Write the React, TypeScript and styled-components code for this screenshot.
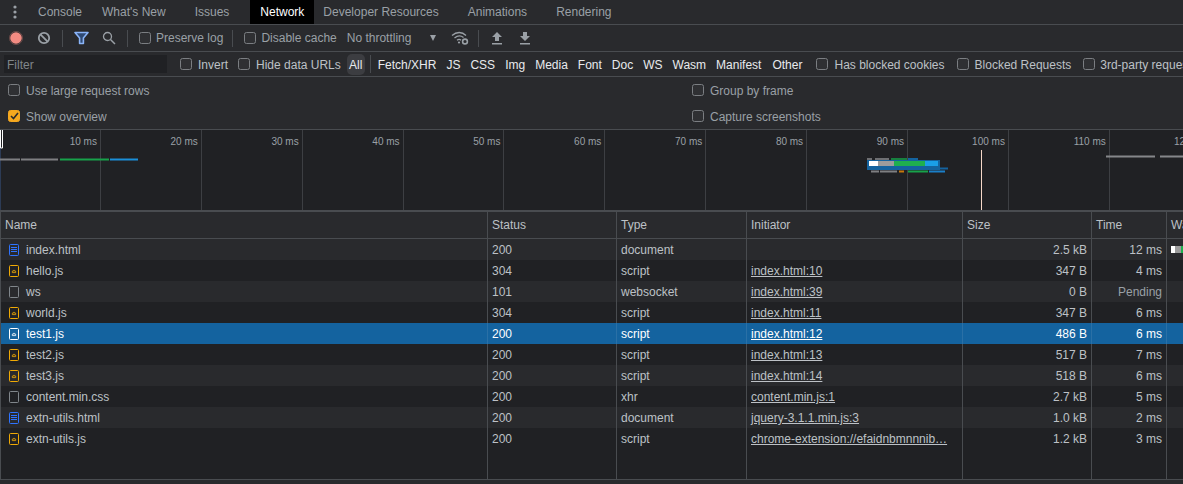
import React from "react";
import styled, { createGlobalStyle, css } from "styled-components";

const Global = createGlobalStyle`
  html, body { margin: 0; padding: 0; background: #292a2d; overflow: hidden; }
  * { box-sizing: border-box; }
`;

const Page = styled.div`
  width: 1183px; height: 484px; overflow: hidden; background: #292a2d;
  font: 12px/1 "Liberation Sans", Arial, sans-serif; color: #9aa0a6;
  display: flex; flex-direction: column;
`;
const Label = styled.span<{ $ml?: number; $bright?: boolean }>`
  margin-left: ${p => p.$ml ?? 5}px; flex: none;
  color: ${p => (p.$bright ? "#bdc1c6" : "#9aa0a6")};
`;
const KindTag = styled.span<{ $ml: number }>`margin-left: ${p => p.$ml}px; color: #e8eaed; flex: none;`;
const Bar = styled.div<{ $h: number; $drop?: boolean }>`
  height: ${p => p.$h}px; flex: none; display: flex; align-items: center;
  border-bottom: 1px solid #494c50; white-space: nowrap; overflow: hidden;
  ${p => p.$drop && css`& > ${Label}, & > ${KindTag} { margin-top: 2px; }`}
`;
const Dots = styled.svg`width: 4px; height: 14px; margin: 0 21px 0 13px; flex: none;`;
const Tab = styled.div`
  width: 64px; height: 24px; margin-left: 21px; flex: none; display: flex; align-items: center; justify-content: center;
  color: #ffffff; background: #000000;
`;
const Tool = styled.svg<{ $ml: number }>`margin-left: ${p => p.$ml}px; flex: none; display: block;`;
const Divider = styled.span<{ $ml: number; $h?: number }>`
  width: 1px; height: ${p => p.$h ?? 17}px; background: #494c50; margin-left: ${p => p.$ml}px; flex: none;
`;
const Check = styled.span<{ $on?: boolean; $ml: number }>`
  width: 12px; height: 12px; flex: none; border-radius: 2.5px; margin-left: ${p => p.$ml}px;
  border: 1px solid ${p => (p.$on ? "#f5a81f" : "#7b7e82")}; background: ${p => (p.$on ? "#f5a81f" : "#2f3033")};
  display: flex; align-items: center; justify-content: center;
`;
const Caret = styled.span`
  margin-left: 19px; width: 0; height: 0; flex: none;
  border-left: 3.5px solid transparent; border-right: 3.5px solid transparent; border-top: 6px solid #9aa0a6;
`;
const FilterBox = styled.div`
  width: 163px; height: 18px; margin-left: 4px; flex: none; background: #202124; color: #80868b;
  padding: 1px 0 0 3px; display: flex; align-items: center;
`;
const Pill = styled.span`
  width: 18px; height: 21px; margin-left: 6px; flex: none; border-radius: 5px; background: #3c3d41; color: #e8eaed;
  padding-top: 1px; display: flex; align-items: center; justify-content: center;
`;
const Settings = styled.div`
  height: 53px; flex: none; border-bottom: 1px solid #494c50;
  display: grid; grid-template-columns: 692px 1fr; grid-auto-rows: 26px; align-items: center;
`;
const Setting = styled.div<{ $ml: number }>`
  display: flex; align-items: center; margin-left: ${p => p.$ml}px;
  & > ${Label} { margin-top: 1px; }
`;

const Overview = styled.div`
  height: 82px; flex: none; position: relative; overflow: hidden; background: #202124;
  border-bottom: 2px solid #494c50; display: flex;
`;
const Tick = styled.div`
  flex: 0 0 100.9px; height: 80px; border-right: 1px solid #3d3f43; text-align: right;
  padding: 7px 3px 0 0; font-size: 10px; color: #9aa0a6; white-space: nowrap;
`;
const OverSvg = styled.svg`position: absolute; left: 0; top: 0;`;

const Table = styled.div`flex: none; height: 268px; border-left: 1px solid #494c50; border-bottom: 1px solid #494c50; display: flex; flex-direction: column;`;
const COLS = "487px 129px 130px 216px 129px 75px 1fr";
const Head = styled.div`
  height: 27px; flex: none; display: grid; grid-template-columns: ${COLS}; background: #292a2d;
  border-bottom: 1px solid #494c50; color: #bdc1c6;
`;
const HeadCell = styled.div`
  border-right: 1px solid #494c50; padding-left: 4px; display: flex; align-items: center; overflow: hidden; white-space: nowrap;
  &:last-child { border-right: 0; }
`;
const Row = styled.div<{ $odd: boolean; $sel?: boolean }>`
  height: 21px; flex: none; display: grid; grid-template-columns: ${COLS};
  background: ${p => (p.$sel ? "#14639f" : p.$odd ? "#292a2d" : "#202124")};
  color: ${p => (p.$sel ? "#ffffff" : "#bdc1c6")};
`;
const Cell = styled.div<{ $right?: boolean; $dim?: boolean; $link?: boolean; $sel?: boolean }>`
  border-right: 1px solid ${p => (p.$sel ? "#2a70a6" : "#494c50")};
  padding: 1px 4px 0; line-height: 20px; overflow: hidden; white-space: nowrap;
  text-align: ${p => (p.$right ? "right" : "left")};
  ${p => p.$dim && "color:#9aa0a6;"}
  ${p => p.$link && "text-decoration: underline;"}
  &:last-child { border-right: 0; padding: 0; }
`;
const NameCell = styled(Cell)`display: flex; align-items: center; padding-left: 8px; gap: 7px;`;
const Filler = styled.div`flex: 1; display: grid; grid-template-columns: ${COLS}; background: #202124;`;
const Wf = styled.div`display: flex; margin: 7px 0 0 4px; height: 7px;`;
const WfPart = styled.span<{ $w: number; $c: string }>`width: ${p => p.$w}px; background: ${p => p.$c}; flex: none;`;

type Kind = "doc" | "js" | "blank";
const FileIcon = ({ kind, sel }: { kind: Kind; sel?: boolean }) => {
  const c = sel ? "#ffffff" : kind === "doc" ? "#2f74ff" : kind === "js" ? "#f0aa05" : "#80868b";
  return (
    <svg width="10" height="12" viewBox="0 0 10 12" style={{ flex: "none" }}>
      <rect x=".5" y=".5" width="9" height="11" rx="1" fill="none" stroke={c} />
      {kind === "doc" && <path d="M2 3.5h6M2 5.5h6M2 7.5h6" stroke={c} fill="none" />}
      {kind === "js" && <path d="M3.3 7.6h3.4V6.2h-1v-.8H4.3v.8h-1z" fill="none" stroke={c} strokeWidth=".8" />}
    </svg>
  );
};

const rows: { n: string; k: Kind; st: string; ty: string; ini: string; sz: string; t: string; sel?: boolean }[] = [
  { n: "index.html", k: "doc", st: "200", ty: "document", ini: "", sz: "2.5 kB", t: "12 ms" },
  { n: "hello.js", k: "js", st: "304", ty: "script", ini: "index.html:10", sz: "347 B", t: "4 ms" },
  { n: "ws", k: "blank", st: "101", ty: "websocket", ini: "index.html:39", sz: "0 B", t: "Pending" },
  { n: "world.js", k: "js", st: "304", ty: "script", ini: "index.html:11", sz: "347 B", t: "6 ms" },
  { n: "test1.js", k: "js", st: "200", ty: "script", ini: "index.html:12", sz: "486 B", t: "6 ms", sel: true },
  { n: "test2.js", k: "js", st: "200", ty: "script", ini: "index.html:13", sz: "517 B", t: "7 ms" },
  { n: "test3.js", k: "js", st: "200", ty: "script", ini: "index.html:14", sz: "518 B", t: "6 ms" },
  { n: "content.min.css", k: "blank", st: "200", ty: "xhr", ini: "content.min.js:1", sz: "2.7 kB", t: "5 ms" },
  { n: "extn-utils.html", k: "doc", st: "200", ty: "document", ini: "jquery-3.1.1.min.js:3", sz: "1.0 kB", t: "2 ms" },
  { n: "extn-utils.js", k: "js", st: "200", ty: "script", ini: "chrome-extension://efaidnbmnnnib…", sz: "1.2 kB", t: "3 ms" },
];

const kinds: [string, number][] = [["Fetch/XHR", 7], ["JS", 10], ["CSS", 10], ["Img", 10], ["Media", 10], ["Font", 10], ["Doc", 10], ["WS", 10], ["Wasm", 10], ["Manifest", 10], ["Other", 11]];
const ticks = ["10 ms", "20 ms", "30 ms", "40 ms", "50 ms", "60 ms", "70 ms", "80 ms", "90 ms", "100 ms", "110 ms", "120 ms"];

const Tick2 = () => (
  <svg width="9" height="8" viewBox="0 0 9 8"><path d="M1 4l2.5 2.5L8 1" fill="none" stroke="#292a2d" strokeWidth="1.6" /></svg>
);

export default function App() {
  return (
    <Page>
      <Global />
      <Bar $h={25}>
        <Dots viewBox="0 0 4 14"><circle cx="2" cy="2" r="1.6" fill="#9aa0a6" /><circle cx="2" cy="7" r="1.6" fill="#9aa0a6" /><circle cx="2" cy="12" r="1.6" fill="#9aa0a6" /></Dots>
        <Label $ml={0}>Console</Label>
        <Label $ml={20}>What's New</Label>
        <Label $ml={29}>Issues</Label>
        <Tab>Network</Tab>
        <Label $ml={9}>Developer Resources</Label>
        <Label $ml={29}>Animations</Label>
        <Label $ml={29}>Rendering</Label>
      </Bar>
      <Bar $h={27}>
        <Tool $ml={9} width="14" height="14" viewBox="0 0 14 14"><circle cx="7" cy="7" r="5.8" fill="#f28b82" /><circle cx="7" cy="7" r="6.6" fill="none" stroke="#f28b82" strokeOpacity=".3" /></Tool>
        <Tool $ml={14} width="14" height="14" viewBox="0 0 14 14"><circle cx="7" cy="7" r="5.2" fill="none" stroke="#9aa0a6" strokeWidth="1.8" /><path d="M3.4 3.4l7.2 7.2" stroke="#9aa0a6" strokeWidth="1.8" /></Tool>
        <Divider $ml={11} />
        <Tool $ml={11} width="15" height="14" viewBox="0 0 15 14"><path d="M1 1.5h13L9.4 7v5.5H5.6V7z" fill="#2f4a73" stroke="#8ab4f8" strokeWidth="1.6" strokeLinejoin="round" /></Tool>
        <Tool $ml={13} width="14" height="14" viewBox="0 0 14 14"><circle cx="5.5" cy="5.5" r="4" fill="none" stroke="#9aa0a6" strokeWidth="1.3" /><path d="M8.5 8.5l4.5 4.5" stroke="#9aa0a6" strokeWidth="1.5" /></Tool>
        <Divider $ml={11} />
        <Check $ml={11} />
        <Label $ml={5}>Preserve log</Label>
        <Divider $ml={9} />
        <Check $ml={11} />
        <Label $ml={5}>Disable cache</Label>
        <Label $ml={10}>No throttling</Label>
        <Caret />
        <Tool $ml={15} width="18" height="14" viewBox="0 0 18 14">
          <path d="M1 4.5C5.5.5 11 .5 15 4.5M3.5 7C6.5 4.5 10 4.5 12.5 6.5M6 9.3c1.2-1 3-1 4 0" fill="none" stroke="#9aa0a6" strokeWidth="1.3" />
          <circle cx="8" cy="11.5" r="1.1" fill="#9aa0a6" />
          <circle cx="14" cy="10.5" r="2.4" fill="none" stroke="#9aa0a6" strokeWidth="1.6" />
        </Tool>
        <Divider $ml={9} />
        <Tool $ml={12} width="12" height="14" viewBox="0 0 12 14"><path d="M6 1l5 5H8v4H4V6H1zM1 12h10v1.4H1z" fill="#9aa0a6" /></Tool>
        <Tool $ml={16} width="12" height="14" viewBox="0 0 12 14"><path d="M4 1h4v4h3l-5 5-5-5h3zM1 12h10v1.4H1z" fill="#9aa0a6" /></Tool>
      </Bar>
      <Bar $h={25} $drop>
        <FilterBox>Filter</FilterBox>
        <Check $ml={13} />
        <Label $ml={6} $bright>Invert</Label>
        <Check $ml={10} />
        <Label $ml={6} $bright>Hide data URLs</Label>
        <Pill>All</Pill>
        <Divider $ml={5} $h={18} />
        {kinds.map(([k, ml]) => <KindTag key={k} $ml={ml}>{k}</KindTag>)}
        <Check $ml={14} />
        <Label $ml={6} $bright>Has blocked cookies</Label>
        <Check $ml={12} />
        <Label $ml={6} $bright>Blocked Requests</Label>
        <Check $ml={12} />
        <Label $ml={5} $bright>3rd-party requests</Label>
      </Bar>
      <Settings>
        <Setting $ml={8}><Check $ml={0} /><Label $ml={6}>Use large request rows</Label></Setting>
        <Setting $ml={0}><Check $ml={0} /><Label $ml={6}>Group by frame</Label></Setting>
        <Setting $ml={8}><Check $ml={0} $on><Tick2 /></Check><Label $ml={6}>Show overview</Label></Setting>
        <Setting $ml={0}><Check $ml={0} /><Label $ml={6}>Capture screenshots</Label></Setting>
      </Settings>
      <Overview>
        {ticks.map(t => <Tick key={t}>{t}</Tick>)}
        <OverSvg width="1183" height="80" viewBox="0 130 1183 80">
          <rect x="0" y="130" width="1" height="80" fill="#2c3b55" />
          <path d="M.5 130v18h2v-18" fill="none" stroke="#fff" />
          <g strokeWidth="2" fill="none">
            <path d="M0 159.5h20M21 159.5h37" stroke="#7e7f81" />
            <path d="M60 159.5h49" stroke="#17a24a" />
            <path d="M110 159.5h28" stroke="#1a8fd8" />
            <path d="M1106 156.5h49M1160 156.5h23" stroke="#85878a" />
          </g>
          <rect x="867" y="160" width="73" height="10" fill="#14639f" />
          <rect x="869" y="161" width="9" height="5" fill="#fff" />
          <rect x="878" y="161" width="16" height="5" fill="#9c9c9c" />
          <rect x="894" y="161" width="31" height="5" fill="#1fb04f" />
          <rect x="925" y="161" width="13" height="5" fill="#1a9fe8" />
          <g strokeWidth="2" fill="none">
            <path d="M867 159h5M875 159h14" stroke="#6e6f72" />
            <path d="M891 159h16" stroke="#17803f" />
            <path d="M908 159h10" stroke="#14639f" />
            <path d="M940 168.5h8" stroke="#14639f" />
            <path d="M871 171.5h8M880 171.5h17" stroke="#7e7f81" />
            <path d="M899 171.5h5" stroke="#c8780a" />
            <path d="M908 171.5h20" stroke="#17a24a" />
            <path d="M929 171.5h16" stroke="#1a7fc8" />
          </g>
          <path d="M981.5 150v60" stroke="#f6d8c8" strokeWidth="1" />
        </OverSvg>
      </Overview>
      <Table>
        <Head>
          {["Name", "Status", "Type", "Initiator", "Size", "Time", "Waterfall"].map(h => <HeadCell key={h}>{h}</HeadCell>)}
        </Head>
        {rows.map((r, i) => (
          <Row key={r.n} $odd={i % 2 === 0} $sel={r.sel}>
            <NameCell $sel={r.sel}><FileIcon kind={r.k} sel={r.sel} />{r.n}</NameCell>
            <Cell $sel={r.sel}>{r.st}</Cell>
            <Cell $sel={r.sel}>{r.ty}</Cell>
            <Cell $sel={r.sel} $link>{r.ini}</Cell>
            <Cell $sel={r.sel} $right>{r.sz}</Cell>
            <Cell $sel={r.sel} $right $dim={r.t === "Pending"}>{r.t}</Cell>
            <Cell $sel={r.sel}>
              {i === 0 && (
                <Wf>
                  <WfPart $w={4} $c="#ffffff" />
                  <WfPart $w={6} $c="#9c9c9c" />
                  <WfPart $w={3} $c="#1fb04f" />
                </Wf>
              )}
            </Cell>
          </Row>
        ))}
        <Filler>
          {[0, 1, 2, 3, 4, 5, 6].map(i => <Cell key={i} />)}
        </Filler>
      </Table>
    </Page>
  );
}
